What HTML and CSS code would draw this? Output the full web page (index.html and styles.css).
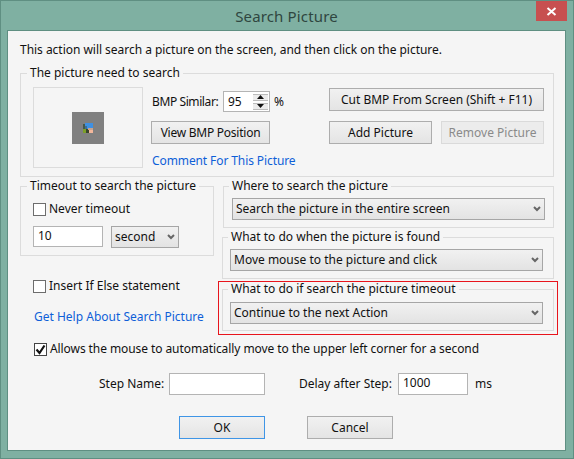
FILE: index.html
```html
<!DOCTYPE html>
<html>
    <head>
        <meta charset="UTF-8">
        <title>Search Picture</title>
        <link rel="stylesheet" href="styles.css">
    </head>

    <body>
        <div class="window">
            <div class="titlebar">
                <span></span>
                <span class="title">Search Picture</span>
                <span class="close">
                    <svg width="11" height="9" viewBox="0 0 11 9"><path d="M1.5 1 L9.5 8 M9.5 1 L1.5 8" stroke="#fff" stroke-width="2" fill="none"/></svg>
                </span>
            </div>

            <div class="client">
                <p class="intro">This action will search a picture on the screen, and then click on the picture.</p>

                <fieldset class="group picture-group">
                    <legend>The picture need to search</legend>
                    <div class="preview">
                        <div class="thumb">
                            <svg width="10" height="10" viewBox="0 0 10 10" shape-rendering="crispEdges">
                                <rect x="2" width="8" height="6" fill="#3f90e2"/>
                                <rect y="1" width="2" height="5" fill="#46584a"/>
                                <rect x="2" y="3" width="2" height="3" fill="#3f6f8f"/>
                                <rect y="6" width="3" height="4" fill="#7c9f28"/>
                                <rect x="3" y="6" width="3" height="4" fill="#39452f"/>
                                <rect x="5" y="5" width="5" height="2" fill="#c9a38c"/>
                                <rect x="6" y="7" width="4" height="3" fill="#f3b79b"/>
                            </svg>
                        </div>
                    </div>
                    <div class="picture-mid">
                        <div class="similar-row">
                            <span class="similar-label">BMP Similar:</span>
                            <div class="spin">
                                <span>95</span>
                                <div class="spin-btns">
                                    <span class="spin-btn"><svg width="7" height="4" viewBox="0 0 7 4"><path d="M3.5 0 L7 4 L0 4 Z" fill="#111"/></svg></span>
                                    <span class="spin-btn"><svg width="7" height="4" viewBox="0 0 7 4"><path d="M0 0 L7 0 L3.5 4 Z" fill="#111"/></svg></span>
                                </div>
                            </div>
                            <span class="percent">%</span>
                        </div>
                        <button class="btn btn-view">View BMP Position</button>
                        <a class="link comment-link">Comment For This Picture</a>
                    </div>
                    <div class="picture-right">
                        <button class="btn btn-cut">Cut BMP From Screen (Shift + F11)</button>
                        <div class="add-row">
                            <button class="btn btn-half">Add Picture</button>
                            <button class="btn btn-half btn-disabled">Remove Picture</button>
                        </div>
                    </div>
                </fieldset>

                <div class="columns">
                    <div class="left-col">
                        <fieldset class="group timeout-group">
                            <legend>Timeout to search the picture</legend>
                            <label class="check-row"><span class="check"></span>Never timeout</label>
                            <div class="timeout-row">
                                <div class="field field-timeout">10</div>
                                <div class="combo combo-unit">
                                    <span>second</span>
                                    <svg width="8" height="6" viewBox="0 0 8 6"><path d="M1 1 L4 4 L7 1" stroke="#666" stroke-width="2" fill="none"/></svg>
                                </div>
                            </div>
                        </fieldset>
                        <label class="check-row insert-row"><span class="check"></span>Insert If Else statement</label>
                        <a class="link help-link">Get Help About Search Picture</a>
                    </div>

                    <div class="right-col">
                        <fieldset class="group action-group where-group">
                            <legend>Where to search the picture</legend>
                            <div class="combo">
                                <span>Search the picture in the entire screen</span>
                                <svg width="8" height="6" viewBox="0 0 8 6"><path d="M1 1 L4 4 L7 1" stroke="#666" stroke-width="2" fill="none"/></svg>
                            </div>
                        </fieldset>
                        <fieldset class="group action-group found-group">
                            <legend>What to do when the picture is found</legend>
                            <div class="combo">
                                <span>Move mouse to the picture and click</span>
                                <svg width="8" height="6" viewBox="0 0 8 6"><path d="M1 1 L4 4 L7 1" stroke="#666" stroke-width="2" fill="none"/></svg>
                            </div>
                        </fieldset>
                        <div class="highlighted">
                            <fieldset class="group action-group expire-group">
                                <legend>What to do if search the picture timeout</legend>
                                <div class="combo">
                                    <span>Continue to the next Action</span>
                                    <svg width="8" height="6" viewBox="0 0 8 6"><path d="M1 1 L4 4 L7 1" stroke="#666" stroke-width="2" fill="none"/></svg>
                                </div>
                            </fieldset>
                        </div>
                    </div>
                </div>

                <label class="check-row allow-row">
                    <span class="check check-on">
                        <svg width="11" height="11" viewBox="0 0 11 11"><path d="M1.5 5.5 L4.5 9 L9.5 1.5" stroke="#111" stroke-width="2.2" fill="none"/></svg>
                    </span>
                    Allows the mouse to automatically move to the upper left corner for a second
                </label>

                <div class="step-row">
                    <span class="step-label">Step Name:</span>
                    <div class="field field-step"></div>
                    <span class="delay-label">Delay after Step:</span>
                    <div class="field field-delay">1000</div>
                    <span class="ms">ms</span>
                </div>

                <div class="action-row">
                    <button class="btn btn-action btn-default">OK</button>
                    <button class="btn btn-action">Cancel</button>
                </div>
            </div>
        </div>
    </body>
</html>
```

FILE: styles.css
```css
* {
    box-sizing: border-box;
}

html, body {
    margin: 0;
    padding: 0;
}

body {
    width: 574px;
    height: 459px;
    overflow: hidden;
    font-family: "Noto Sans", Tahoma, sans-serif;
    font-size: 12px;
    line-height: 16px;
    color: #111;
}

.window {
    display: flex;
    flex-direction: column;
    width: 574px;
    height: 459px;
    padding: 0 7px 7px 6px;
    background-color: #7fb0a2;
    border: 1px solid #5f8f82;
}

.titlebar {
    display: grid;
    grid-template-columns: 1fr auto 1fr;
    align-items: start;
    height: 29px;
    flex: none;
}

.title {
    padding-top: 5px;
    font-size: 15px;
    line-height: 20px;
    letter-spacing: 0.15px;
    color: #2f4640;
}

.close {
    display: flex;
    align-items: center;
    justify-content: center;
    justify-self: end;
    width: 31px;
    height: 20px;
    margin-right: -1px;
    background-color: #c75050;
}

.client {
    flex: 1;
    padding: 11px 11px 0 12px;
    background-color: #f5f5f5;
    border: 1px solid #5f8f82;
}

.intro {
    margin: 0 0 7px 0;
    letter-spacing: -0.03px;
}

.group {
    margin: 0;
    padding: 0;
    border: 1px solid #dcdcdc;
    min-width: 0;
}

.group legend {
    padding: 0 3px;
    margin-left: -3px;
}

.picture-group {
    display: flex;
    padding: 6px 9px 7px 12px;
}

.picture-group legend {
    margin-left: -6px;
}

.preview {
    display: flex;
    align-items: center;
    justify-content: center;
    flex: none;
    width: 110px;
    height: 81px;
    border: 1px solid #dcdcdc;
}

.thumb {
    display: flex;
    align-items: center;
    justify-content: center;
    width: 32px;
    height: 32px;
    background-color: #808080;
}

.picture-mid {
    flex: none;
    width: 178px;
    margin-left: 8px;
    padding-top: 4px;
}

.similar-row {
    display: flex;
    align-items: center;
    height: 21px;
    padding-left: 1px;
}

.similar-label {
    flex: none;
    width: 71px;
    white-space: nowrap;
    letter-spacing: -0.4px;
}

.spin {
    display: flex;
    align-items: center;
    justify-content: space-between;
    width: 47px;
    height: 21px;
    padding: 0 1px 0 4px;
    background-color: #fff;
    border: 1px solid #b4b4b4;
}

.spin-btns {
    display: flex;
    flex-direction: column;
    gap: 2px;
}

.spin-btn {
    display: flex;
    align-items: center;
    justify-content: center;
    width: 15px;
    height: 7px;
    background-color: #ececec;
    border: 1px solid #bcbcbc;
    border-width: 1px 0;
}

.percent {
    margin-left: 4px;
}

.btn {
    display: block;
    height: 23px;
    padding: 0;
    font-family: inherit;
    font-size: 12px;
    color: #111;
    background: linear-gradient(#f1f1f1, #e4e4e4);
    border: 1px solid #adadad;
}

.btn-view {
    width: 119px;
    margin-top: 9px;
    letter-spacing: -0.25px;
}

.link {
    display: block;
    color: #0e5fd8;
}

.comment-link {
    margin: 9px 0 0 1px;
    letter-spacing: -0.1px;
}

.picture-right {
    flex: none;
    margin-top: 1px;
}

.btn-cut {
    width: 215px;
}

.add-row {
    display: flex;
    gap: 9px;
    margin-top: 10px;
}

.btn-half {
    width: 103px;
}

.btn-disabled {
    color: #8a8a8a;
    background: #ececec;
    border-color: #dadada;
}

.columns {
    display: flex;
    gap: 8px;
    margin-top: 1px;
}

.left-col {
    flex: none;
    width: 194px;
}

.timeout-group {
    padding: 7px 7px 7px 12px;
}

.timeout-group legend {
    margin-left: -6px;
}

.check-row {
    display: flex;
    align-items: center;
    gap: 3px;
}

.check {
    display: flex;
    align-items: center;
    justify-content: center;
    flex: none;
    width: 13px;
    height: 13px;
    background-color: #fff;
    border: 1px solid #6d6d6d;
}

.timeout-row {
    display: flex;
    gap: 8px;
    margin-top: 9px;
}

.field {
    height: 21px;
    padding: 1px 4px;
    background-color: #fff;
    border: 1px solid #b4b4b4;
}

.field-timeout {
    width: 70px;
}

.combo {
    display: flex;
    align-items: center;
    justify-content: space-between;
    height: 22px;
    padding: 0 3px 0 3px;
    background: linear-gradient(#f1f1f1, #e3e3e3);
    border: 1px solid #a6a6a6;
}

.combo-unit {
    width: 68px;
}

.insert-row {
    margin: 22px 0 0 13px;
}

.help-link {
    margin: 15px 0 0 14px;
}

.right-col {
    flex: none;
    width: 332px;
}

.action-group {
    padding: 4px 10px 7px 7px;
}

.action-group legend {
    margin-left: -2px;
}

.where-group {
    margin-left: 1px;
    padding-left: 8px;
    padding-right: 8px;
}

.where-group legend {
    margin-left: -3px;
}

.found-group {
    margin-top: 1px;
}

.highlighted {
    position: relative;
    margin-top: 2px;
}

.highlighted::after {
    content: "";
    position: absolute;
    top: 0;
    right: -4px;
    bottom: -4px;
    left: -4px;
    border: 1px solid #e8141c;
}

.expire-group {
    padding-top: 5px;
    padding-bottom: 6px;
}

.allow-row {
    margin: 10px 0 0 14px;
    letter-spacing: -0.08px;
}

.check-on {
    border-color: #444;
}

.step-row {
    display: flex;
    align-items: center;
    margin-top: 16px;
    padding-left: 79px;
}

.step-label {
    flex: none;
    width: 65px;
    margin-right: 5px;
    white-space: nowrap;
}

.field-step {
    width: 96px;
    height: 22px;
}

.delay-label {
    flex: none;
    width: 93px;
    margin: 0 6px 0 34px;
    white-space: nowrap;
}

.field-delay {
    width: 70px;
    height: 22px;
}

.ms {
    margin-left: 7px;
}

.action-row {
    display: flex;
    gap: 42px;
    margin-top: 21px;
    padding-left: 159px;
}

.btn-action {
    width: 86px;
}

.btn-default {
    border-color: #3f95e6;
}
```
